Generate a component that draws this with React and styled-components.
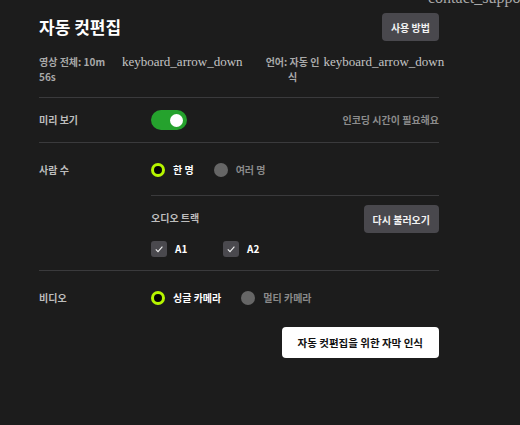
import React, { useState } from "react";
import styled, { createGlobalStyle } from "styled-components";

const GlobalStyle = createGlobalStyle`
  html, body {
    margin: 0;
    padding: 0;
    background: #1c1c1c;
  }
  body {
    font-family: "Noto Sans CJK KR", "Noto Sans", sans-serif;
    min-height: 425px;
    overflow: hidden;
  }
`;

const App = () => {
  const [preview, setPreview] = useState(true);
  const [people, setPeople] = useState("one");
  const [video, setVideo] = useState("single");
  const [tracks, setTracks] = useState({ A1: true, A2: true });

  return (
    <Page>
      <GlobalStyle />
      <HelpIcon>contact_support</HelpIcon>
      <Panel>
        <Header>
          <Title>자동 컷편집</Title>
          <GreyButton>사용 방법</GreyButton>
        </Header>

        <InfoRow>
          <Field>
            <FieldLabel width="76px">영상 전체: 10m 56s</FieldLabel>
            <IconText>keyboard_arrow_down</IconText>
          </Field>
          <Field>
            <FieldLabel width="58px" center>
              언어: 자동 인식
            </FieldLabel>
            <IconText>keyboard_arrow_down</IconText>
          </Field>
        </InfoRow>

        <Section pad="12px">
          <RowLabel center>미리 보기</RowLabel>
          <RowBody>
            <Toggle on={preview} onClick={() => setPreview(!preview)}>
              <Knob />
            </Toggle>
            <Hint>인코딩 시간이 필요해요</Hint>
          </RowBody>
        </Section>

        <Section pad="20px" padBottom="13px">
          <RowLabel>사람 수</RowLabel>
          <Column>
            <RadioGroup>
              <RadioItem onClick={() => setPeople("one")}>
                <Radio checked={people === "one"} />
                <RadioText checked={people === "one"}>한 명</RadioText>
              </RadioItem>
              <RadioItem onClick={() => setPeople("many")}>
                <Radio checked={people === "many"} />
                <RadioText checked={people === "many"}>여러 명</RadioText>
              </RadioItem>
            </RadioGroup>
            <SubDivider />
            <AudioHeader>
              <SubLabel>오디오 트랙</SubLabel>
              <GreyButton>다시 불러오기</GreyButton>
            </AudioHeader>
            <CheckRow>
              {["A1", "A2"].map((t) => (
                <CheckItem
                  key={t}
                  onClick={() => setTracks({ ...tracks, [t]: !tracks[t] })}
                >
                  <CheckBox>
                    {tracks[t] && (
                      <svg width="10" height="10" viewBox="0 0 10 10">
                        <path
                          d="M1.8 5.4 L4 7.6 L8.4 2.6"
                          fill="none"
                          stroke="#f2f2f2"
                          strokeWidth="1.1"
                        />
                      </svg>
                    )}
                  </CheckBox>
                  <CheckText>{t}</CheckText>
                </CheckItem>
              ))}
            </CheckRow>
          </Column>
        </Section>

        <Section pad="20px" padBottom="0" last>
          <RowLabel>비디오</RowLabel>
          <RadioGroup>
            <RadioItem onClick={() => setVideo("single")}>
              <Radio checked={video === "single"} />
              <RadioText checked={video === "single"}>싱글 카메라</RadioText>
            </RadioItem>
            <RadioItem onClick={() => setVideo("multi")}>
              <Radio checked={video === "multi"} />
              <RadioText checked={video === "multi"}>멀티 카메라</RadioText>
            </RadioItem>
          </RadioGroup>
        </Section>

        <Footer>
          <WhiteButton>자동 컷편집을 위한 자막 인식</WhiteButton>
        </Footer>
      </Panel>
    </Page>
  );
};

export default App;

// --- Styled Components ---

const Page = styled.div`
  position: relative;
  width: 520px;
  height: 425px;
  background: #1c1c1c;
  overflow: hidden;
`;

const HelpIcon = styled.span`
  position: absolute;
  top: -10px;
  left: 428px;
  font-family: "Liberation Serif", serif;
  font-size: 16px;
  line-height: 16px;
  color: #a8a8a8;
  white-space: nowrap;
`;

const Panel = styled.div`
  width: 400px;
  margin-left: 39px;
  padding-top: 13px;
`;

const Header = styled.div`
  display: flex;
  justify-content: space-between;
  align-items: center;
`;

const Title = styled.h1`
  margin: 0;
  font-size: 17px;
  line-height: 24px;
  font-weight: 700;
  color: #ffffff;
`;

const GreyButton = styled.button`
  height: 28px;
  padding: 0 9px;
  border: none;
  border-radius: 4px;
  background: #49484d;
  color: #f2f2f2;
  font-family: inherit;
  font-size: 10px;
  font-weight: 700;
  cursor: pointer;
`;

const InfoRow = styled.div`
  display: flex;
  gap: 21px;
  margin-top: 13px;
  padding-bottom: 13px;
  border-bottom: 1px solid #3a3a3c;
`;

const Field = styled.div`
  display: flex;
  align-items: flex-start;
  gap: 7px;
`;

const FieldLabel = styled.span`
  width: ${(p) => p.width};
  font-size: 10px;
  line-height: 15px;
  font-weight: 700;
  color: #a9a9a9;
  text-align: ${(p) => (p.center ? "center" : "left")};
  ${(p) => p.center && "margin-right: -5px;"}
`;

const IconText = styled.span`
  font-family: "Liberation Serif", serif;
  font-size: 13px;
  line-height: 15px;
  color: #c4c4c4;
  white-space: nowrap;
`;

const Section = styled.div`
  display: flex;
  align-items: flex-start;
  padding: ${(p) => p.pad} 0 ${(p) => p.padBottom || p.pad};
  border-bottom: ${(p) => (p.last ? "none" : "1px solid #3a3a3c")};
`;

const RowLabel = styled.div`
  width: 112px;
  flex-shrink: 0;
  font-size: 10px;
  line-height: 14px;
  font-weight: 700;
  color: #bdbdbd;
  align-self: ${(p) => (p.center ? "center" : "flex-start")};
`;

const RowBody = styled.div`
  flex: 1;
  display: flex;
  align-items: center;
  justify-content: space-between;
`;

const Toggle = styled.div`
  width: 36px;
  height: 20px;
  border-radius: 10px;
  background: ${(p) => (p.on ? "#25a22d" : "#555")};
  display: flex;
  align-items: center;
  justify-content: ${(p) => (p.on ? "flex-end" : "flex-start")};
  padding: 0 4px;
  box-sizing: border-box;
  cursor: pointer;
`;

const Knob = styled.div`
  width: 13px;
  height: 13px;
  border-radius: 50%;
  background: #ffffff;
`;

const Hint = styled.span`
  font-size: 10px;
  line-height: 14px;
  font-weight: 700;
  color: #8c8c8c;
`;

const Column = styled.div`
  flex: 1;
  display: flex;
  flex-direction: column;
`;

const RadioGroup = styled.div`
  display: flex;
  align-items: center;
  gap: 20px;
`;

const RadioItem = styled.label`
  display: flex;
  align-items: center;
  gap: 8px;
  cursor: pointer;
`;

const Radio = styled.span`
  width: 14px;
  height: 14px;
  border-radius: 50%;
  box-sizing: border-box;
  background: ${(p) => (p.checked ? "#050505" : "#666666")};
  border: ${(p) => (p.checked ? "3px solid #b6f500" : "none")};
`;

const RadioText = styled.span`
  font-size: 10px;
  line-height: 14px;
  font-weight: 700;
  color: ${(p) => (p.checked ? "#ffffff" : "#8a8a8a")};
`;

const SubDivider = styled.div`
  height: 1px;
  background: #3a3a3c;
  margin: 18px 0 9px;
`;

const AudioHeader = styled.div`
  display: flex;
  align-items: center;
  justify-content: space-between;
`;

const SubLabel = styled.span`
  font-size: 10px;
  line-height: 14px;
  font-weight: 700;
  color: #bdbdbd;
  margin-top: -3px;
`;

const CheckRow = styled.div`
  display: flex;
  margin-top: 8px;
`;

const CheckItem = styled.label`
  width: 72px;
  display: flex;
  align-items: center;
  gap: 8px;
  cursor: pointer;
`;

const CheckBox = styled.span`
  width: 16px;
  height: 16px;
  border-radius: 3px;
  background: #4a494e;
  display: flex;
  align-items: center;
  justify-content: center;
`;

const CheckText = styled.span`
  font-size: 10px;
  line-height: 14px;
  font-weight: 700;
  color: #ffffff;
`;

const Footer = styled.div`
  display: flex;
  justify-content: flex-end;
  margin-top: 22px;
`;

const WhiteButton = styled.button`
  height: 31px;
  padding: 0 16px;
  border: none;
  border-radius: 4px;
  background: #ffffff;
  color: #111111;
  font-family: inherit;
  font-size: 10.5px;
  font-weight: 700;
  cursor: pointer;
`;
